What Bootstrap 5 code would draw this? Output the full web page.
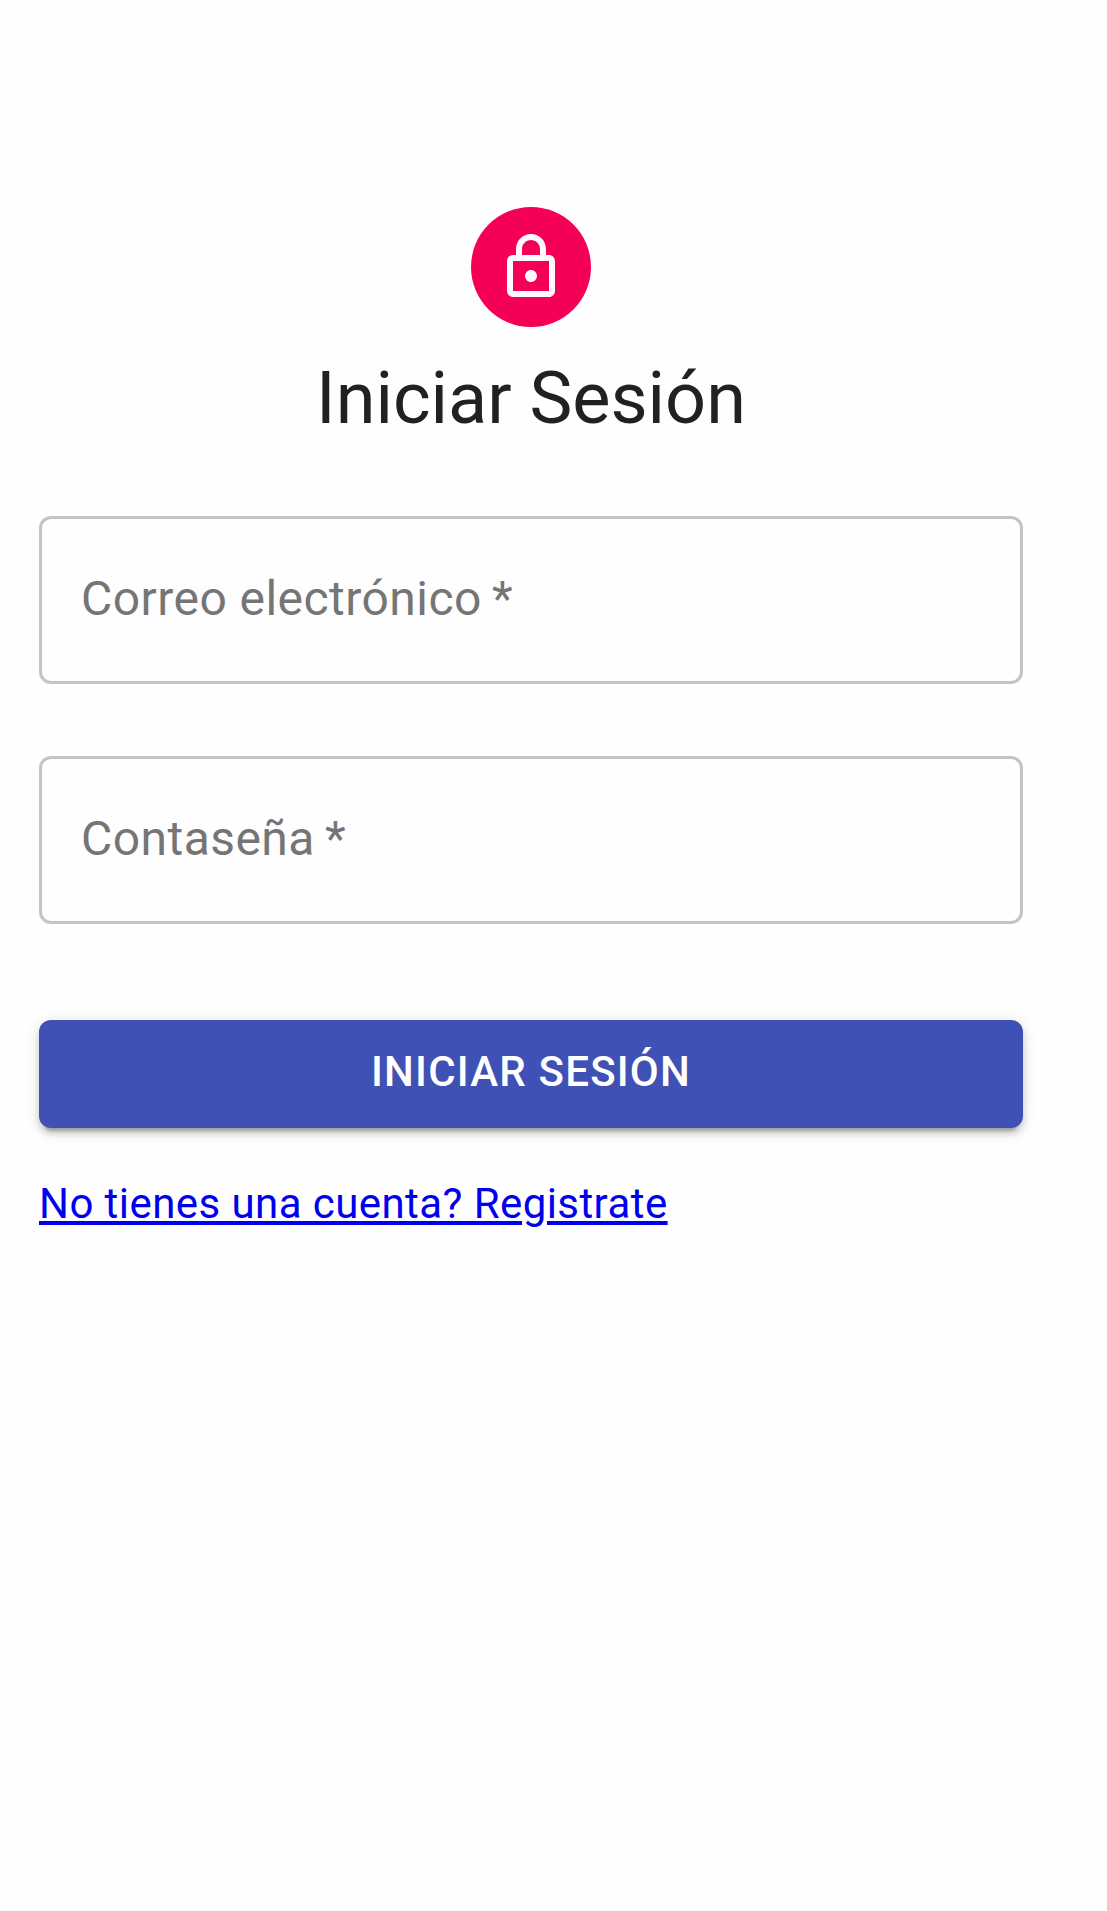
<!DOCTYPE html>
<html lang="es">
<head>
<meta charset="utf-8">
<meta name="viewport" content="width=device-width, initial-scale=1">
<title>Iniciar Sesión</title>
<link href="https://cdn.jsdelivr.net/npm/bootstrap@5.3.0/dist/css/bootstrap.min.css" rel="stylesheet">
<style>
body { font-family: Roboto, "Liberation Sans", sans-serif; background: #fefefe; color: #212121; }
.login-panel { width: 984px; margin-left: 39px; padding-top: 207px; }
.login-avatar { width: 120px; height: 120px; background: #f50057; color: #fafafa; }
.login-title { font-size: 72px; line-height: 96px; font-weight: 400; margin: 24px 0 69px; }
.login-form { gap: 72px; }
.login-field.form-control { height: 168px; border: 3px solid #c4c4c4; border-radius: 12px; padding: 0 39px 4px; font-size: 48px; letter-spacing: .45px; background: transparent; color: #212121; }
.login-field::placeholder { color: #757575; opacity: 1; }
.login-submit.btn { --bs-btn-bg: #3f51b5; --bs-btn-border-color: #3f51b5; --bs-btn-hover-bg: #303f9f; height: 108px; margin-top: 24px; border: 0; border-radius: 12px; padding: 0 48px 4px; font-size: 42px; font-weight: 500; line-height: 72px; letter-spacing: 1.2px; box-shadow: 0 9px 3px -6px rgba(0,0,0,.2), 0 6px 6px 0 rgba(0,0,0,.14), 0 3px 15px 0 rgba(0,0,0,.12); }
.login-register { margin-top: 46px; font-size: 42px; line-height: 60px; letter-spacing: .43px; color: #0000ee; text-decoration-thickness: 3px; text-underline-offset: 3px; }
</style>
<script src="https://cdn.jsdelivr.net/npm/bootstrap@5.3.0/dist/js/bootstrap.bundle.min.js"></script>
</head>
<body>
<main class="login-panel d-flex flex-column">
  <div class="login-avatar rounded-circle d-flex align-items-center justify-content-center align-self-center">
    <svg width="72" height="72" viewBox="0 0 24 24" fill="currentColor" aria-hidden="true"><path d="M12 17c1.100 0 2-.9 2-2s-.9-2-2-2-2 .9-2 2 .9 2 2 2zM18 8h-1V6c0-2.760-2.240-5-5-5S7 3.240 7 6v2H6c-1.100 0-2 .9-2 2v10c0 1.100.9 2 2 2h12c1.100 0 2-.9 2-2V10c0-1.100-.9-2-2-2zM9 6c0-1.660 1.340-3 3-3s3 1.340 3 3v2H9V6zM18 20H6V10h12v10z"/></svg>
  </div>
  <h1 class="login-title text-center">Iniciar Sesión</h1>
  <form class="login-form d-flex flex-column">
    <input class="form-control login-field" type="email" placeholder="Correo electrónico&thinsp;*" aria-label="Correo electrónico">
    <input class="form-control login-field" type="password" placeholder="Contaseña&thinsp;*" aria-label="Contaseña">
    <button class="btn btn-primary login-submit w-100 text-uppercase" type="button">Iniciar Sesión</button>
  </form>
  <a class="login-register align-self-start text-decoration-underline" href="#">No tienes una cuenta? Registrate</a>
</main>
</body>
</html>
